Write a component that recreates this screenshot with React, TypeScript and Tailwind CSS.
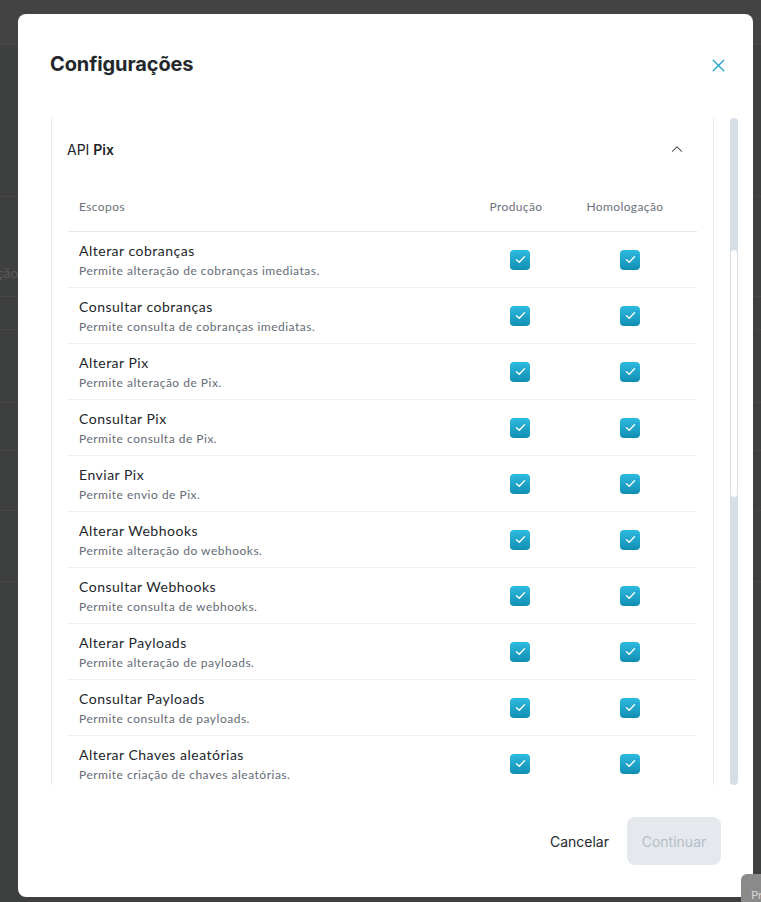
import { X, ChevronUp } from 'lucide-react';

const scopes = [
  { title: 'Alterar cobranças', desc: 'Permite alteração de cobranças imediatas.' },
  { title: 'Consultar cobranças', desc: 'Permite consulta de cobranças imediatas.' },
  { title: 'Alterar Pix', desc: 'Permite alteração de Pix.' },
  { title: 'Consultar Pix', desc: 'Permite consulta de Pix.' },
  { title: 'Enviar Pix', desc: 'Permite envio de Pix.' },
  { title: 'Alterar Webhooks', desc: 'Permite alteração do webhooks.' },
  { title: 'Consultar Webhooks', desc: 'Permite consulta de webhooks.' },
  { title: 'Alterar Payloads', desc: 'Permite alteração de payloads.' },
  { title: 'Consultar Payloads', desc: 'Permite consulta de payloads.' },
  { title: 'Alterar Chaves aleatórias', desc: 'Permite criação de chaves aleatórias.' },
  { title: 'Consultar Chaves aleatórias', desc: 'Permite consulta de chaves aleatórias.' },
];

function Check() {
  return (
    <div className="w-5 h-5 rounded-[4px] bg-gradient-to-b from-[#2dbbe0] to-[#108eb2] flex items-center justify-center">
      <svg width="11" height="9" viewBox="0 0 11 9" fill="none">
        <path d="M1.5 4.8 L4.2 7.2 L9.5 1.8" stroke="white" strokeWidth="1.4" strokeLinecap="round" strokeLinejoin="round" />
      </svg>
    </div>
  );
}

export default function App() {
  return (
    <div className="relative w-full h-[902px] overflow-hidden bg-[#3e3f3f] font-['Lato',sans-serif]">
      {/* page behind the overlay */}
      <div className="flex flex-col">
        <div className="h-[45px] bg-[#434343] border-b border-[#4a4a4a]" />
        <div className="h-[152px] border-b border-[#474747]" />
        <div className="h-[100px] border-b border-[#474747] flex items-end pb-[13px]">
          <span className="-ml-[34px] text-[14px] text-[#5a5a5a]">Situação</span>
        </div>
        <div className="h-[33px] border-b border-[#474747]" />
        <div className="h-[73px] border-b border-[#474747]" />
        <div className="h-[48px] border-b border-[#474747]" />
        <div className="h-[60px] border-b border-[#474747]" />
        <div className="h-[71px] border-b border-[#474747]" />
      </div>

      {/* modal */}
      <div className="absolute inset-0 pl-[18px] pr-[8px] pt-[14px] pb-[5px] flex">
        <div className="flex-1 bg-white rounded-lg flex flex-col">
          <div className="flex items-center justify-between pl-[32px] pr-[23px] pt-[36px] h-[64px]">
            <h1 className="text-[20px] leading-7 font-bold text-[#23272b] font-['Inter',sans-serif] tracking-[-0.1px]">Configurações</h1>
            <button className="w-6 h-6 mt-[3px] flex items-center justify-center text-[#2ba6cf]">
              <X size={21} strokeWidth={1.6} />
            </button>
          </div>

          <div className="mt-[40px] ml-[32px] mr-[15px] h-[667px] flex gap-[16px]">
            <div className="flex-1 overflow-hidden pl-px">
              <div className="border-l border-r border-[#e4ecf4]">
                <div className="h-[62px] flex items-center justify-between pl-[15px] pr-[27px]">
                  <span className="text-[14px] text-[#1f2328] font-['Inter',sans-serif]">
                    API <span className="font-semibold">Pix</span>
                  </span>
                  <ChevronUp size={18} strokeWidth={1.4} className="text-[#333]" />
                </div>
                <div className="px-[16px]">
                  <div className="mt-[4px] h-[48px] flex items-center pb-[2px] border-b border-[#e2e7ec] text-[12px] tracking-[0.4px] text-[#6b7079]">
                    <div className="flex-1 pl-[11px]">Escopos</div>
                    <div className="w-[110px] text-center pr-[8px]">Produção</div>
                    <div className="w-[110px] text-center pr-[10px]">Homologação</div>
                    <div className="w-[12px]" />
                  </div>
                  {scopes.map((s) => (
                    <div key={s.title} className="h-[56px] flex items-center border-b border-[#edf1f5]">
                      <div className="flex-1 pl-[11px]">
                        <div className="text-[14px] leading-5 tracking-[0.5px] text-[#22262b]">{s.title}</div>
                        <div className="text-[12px] leading-4 mt-[2px] tracking-[0.5px] text-[#656b75]">{s.desc}</div>
                      </div>
                      <div className="w-[110px] flex justify-center"><Check /></div>
                      <div className="w-[110px] flex justify-center"><Check /></div>
                      <div className="w-[12px]" />
                    </div>
                  ))}
                </div>
              </div>
            </div>
            <div className="w-[8px] rounded-full bg-[#d6dee6] flex flex-col pt-[131px]">
              <div className="h-[249px] rounded-full bg-white border border-[#d6dee6]" />
            </div>
          </div>

          <div className="flex-1 flex items-center justify-end gap-[18px] pr-[32px]">
            <button className="text-[14px] text-[#25292e] font-['Inter',sans-serif]">Cancelar</button>
            <button className="w-[94px] h-[48px] rounded-lg bg-[#e5e9ee] text-[14px] text-[#b5bdc8] font-['Inter',sans-serif]">Continuar</button>
          </div>
        </div>
      </div>

      {/* floating help button peeking in */}
      <div className="absolute left-[741px] top-[874px] w-[60px] h-[40px] rounded-md bg-[#8a8a8a] pl-[10px] pt-[12px] text-[12px] text-[#d4d4d4]">
        Precisa
      </div>
    </div>
  );
}
